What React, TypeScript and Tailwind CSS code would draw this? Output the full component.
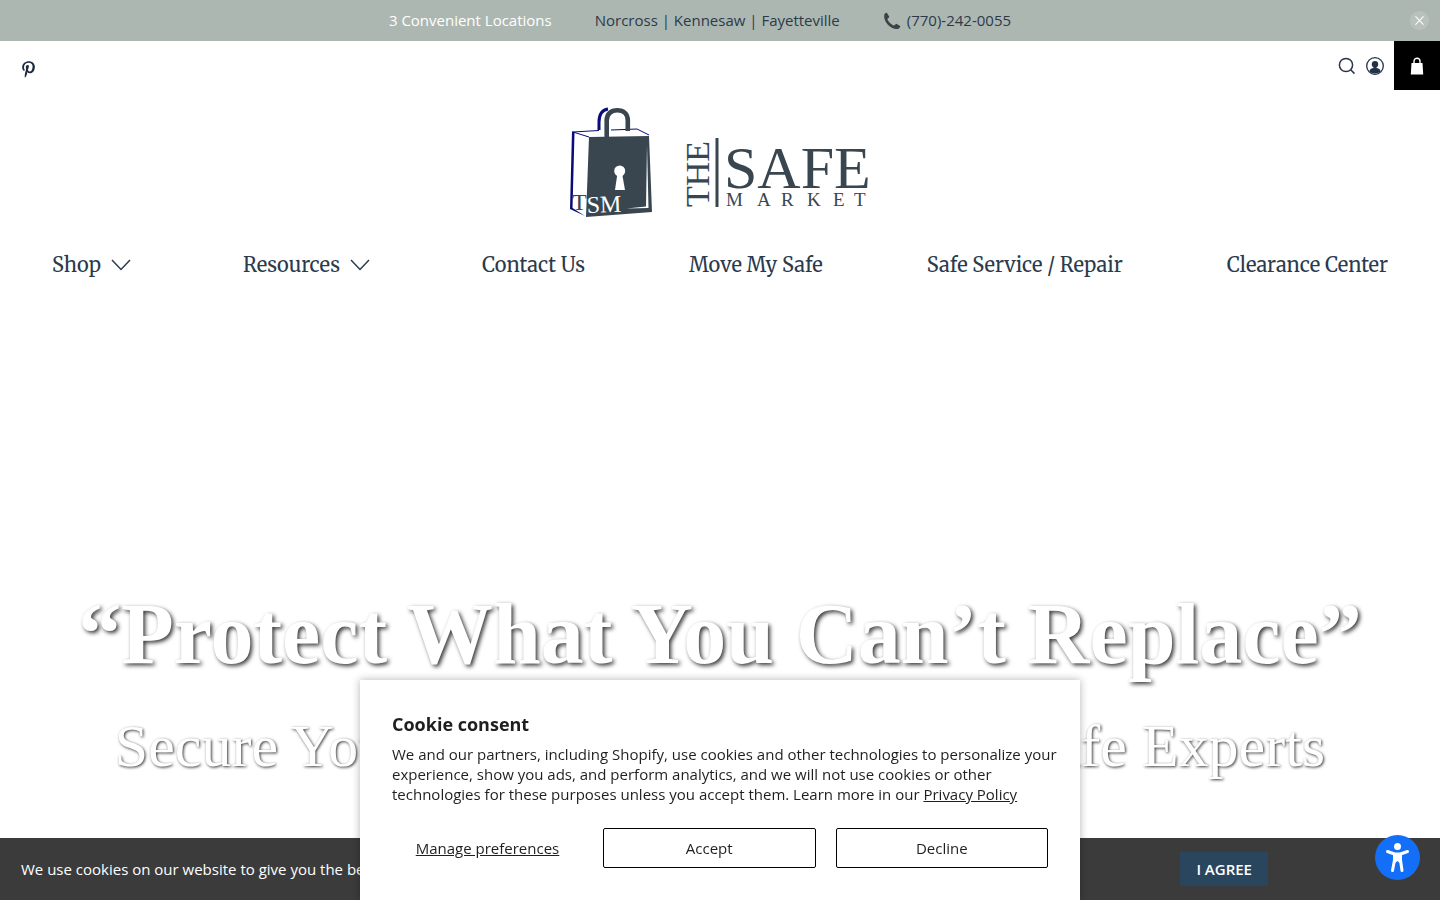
import { FaPinterestP } from 'react-icons/fa';

const navItems = [
  { label: 'Shop', menu: true },
  { label: 'Resources', menu: true },
  { label: 'Contact Us', menu: false },
  { label: 'Move My Safe', menu: false },
  { label: 'Safe Service / Repair', menu: false },
  { label: 'Clearance Center', menu: false },
];

function Logo() {
  return (
    <svg viewBox="0 0 304 112" className="h-28 w-[304px]" role="img" aria-label="The Safe Market">
      {/* bag */}
      <path d="M30 23V15C30 7 33 3 39 2" fill="none" stroke="#0a0a78" strokeWidth="3" />
      <path d="M4 25L20 30M4 25L30 23.500M42 23L68 22L80 28" fill="none" stroke="#0a0a78" strokeWidth="1" />
      <path d="M3 24L5.500 26L3.500 101L16 109L1 102Z" fill="#0a0a78" />
      <path d="M20 30L80 29L83 105L17 110Z" fill="#39464f" />
      <path d="M37.700 31V13.500C37.700 7 42 3.300 48.300 3.300S58.800 7 58.800 13.500V24" fill="none" stroke="#39464f" strokeWidth="4.600" />
      <circle cx="50.700" cy="64" r="5.500" fill="#fff" />
      <path d="M48.500 66H53L56 83H46Z" fill="#fff" />
      <path d="M78 38L79.500 101L57.500 101.500L77 99.500Z" fill="#fff" />
      <g fontFamily="'Liberation Serif', serif">
        <text x="3" y="103" fontSize="24" fill="#39464f">T</text>
        <text x="18" y="106" fontSize="24" fill="#fff" transform="rotate(-2 18 106)">SM</text>
      </g>
      {/* wordmark */}
      <g fontFamily="'Liberation Serif', serif" fill="#39464f">
        <text x="0" y="0" fontSize="34" transform="translate(140 100) rotate(-90)">THE</text>
        <text x="155" y="81" fontSize="60">SAFE</text>
        <text x="157 188 212 238 264 285" y="99" fontSize="19">MARKET</text>
      </g>
      <path d="M146.500 31H149.500V100H146.500Z" fill="#39464f" />
    </svg>
  );
}

function AnnouncementBar() {
  return (
    <div className="relative flex h-[41px] items-center justify-center bg-[#adb7b2] pr-10 text-[15px] text-[#2b3a4a]">
      <div className="flex items-center gap-[43px]">
        <span className="text-white">3 Convenient Locations</span>
        <span>Norcross | Kennesaw | Fayetteville</span>
        <a href="#call" className="flex items-center gap-1.5">
          <svg viewBox="0 0 18 18" className="size-[18px]" fill="#3b4347" aria-hidden="true">
            <path d="M1.200 3C1.600 1.500 2.900.7 4 .9L6.300 4.700C6.100 5.700 4.700 6.300 4.400 7C5 9.300 8.500 12.900 11 13.500C11.800 13.300 12.200 12 13.300 11.700L17.200 13.900C17.300 15.300 16 16.700 14.300 17C7.500 17.400.2 9.500 1.200 3Z" />
          </svg>
          (770)-242-0055
        </a>
      </div>
      <button type="button" aria-label="Close" className="absolute right-[11px] flex size-[19px] items-center justify-center rounded-full bg-white/15">
        <svg viewBox="0 0 10 10" className="size-[9px]" fill="none" stroke="#fff" strokeWidth="1.200">
          <path d="M.5.5L9.500 9.500M9.500.5L.5 9.500" />
        </svg>
      </button>
    </div>
  );
}

function Header() {
  return (
    <header>
      <div className="flex h-[49px] items-center justify-between pl-5">
        <a href="#pinterest" aria-label="Pinterest" className="pt-2 text-[#1f2b3d]">
          <FaPinterestP size={17} />
        </a>
        <div className="flex h-full items-center">
          <button type="button" aria-label="Search" className="mr-2.5">
            <svg viewBox="0 0 18 18" className="size-[18px]" fill="none" stroke="#2b3548" strokeWidth="1.500">
              <circle cx="8" cy="8" r="6.600" />
              <path d="M12.700 12.800L16.500 16.600" />
            </svg>
          </button>
          <a href="#account" aria-label="Account" className="mr-2.5">
            <svg viewBox="0 0 18 18" className="size-[18px]" fill="#22324a">
              <circle cx="9" cy="9" r="8.300" fill="none" stroke="#22324a" strokeWidth="1.300" />
              <circle cx="9" cy="7.300" r="3.200" />
              <path d="M3.300 14.300C4 12 5.800 11.300 7.500 11.100V9H10.500V11.100C12.200 11.300 14 12 14.700 14.300C11.700 17.200 6.300 17.200 3.300 14.300Z" />
            </svg>
          </a>
          <a href="#cart" aria-label="Cart" className="flex h-full w-[46px] items-center justify-center bg-black">
            <svg viewBox="0 0 14 18" className="h-[18px] w-3.5" fill="#fff">
              <path d="M1.500 6H12.500L13.200 17.500H.8Z" />
              <path d="M4 7V4.200C4 .2 10 .2 10 4.200V7" fill="none" stroke="#fff" strokeWidth="1.400" />
            </svg>
          </a>
        </div>
      </div>
      <a href="#home" className="mt-[17px] flex justify-center pl-0.5">
        <Logo />
      </a>
      <nav className="mt-7 flex items-center justify-between px-[52px] font-['Merriweather','DejaVu_Serif_Condensed','DejaVu_Serif',serif] text-xl text-[#2b3a4c]">
        {navItems.map((item) => (
          <a key={item.label} href="#nav" className="flex items-center leading-9">
            {item.label}
            {item.menu && (
              <svg viewBox="0 0 20 12" className="mr-2 ml-2.5 h-3 w-5" fill="none" stroke="#2b3a4c" strokeWidth="1.500">
                <path d="M1 1L10 10.500L19 1" />
              </svg>
            )}
          </a>
        ))}
      </nav>
    </header>
  );
}

function Hero() {
  return (
    <main className="overflow-hidden pt-[301px] pb-16 text-center font-['Liberation_Serif',serif] text-white">
      <h1 className="text-[86px] leading-[100px] font-bold whitespace-nowrap [text-shadow:2px_2px_4px_rgba(0,0,0,0.8)]">
        “Protect What You Can’t Replace”
      </h1>
      <p className="mt-[26px] text-[60px] leading-[72px] whitespace-nowrap [text-shadow:1px_1px_3px_rgba(0,0,0,0.8)]">
        Secure Your Valuables with Atlanta’s Safe Experts
      </p>
    </main>
  );
}

function CookieBar() {
  return (
    <div className="fixed inset-x-0 bottom-0 flex h-[62px] items-center justify-between bg-[#3b3b3b] pr-[172px] pl-[21px] text-[15px] text-white">
      <p>We use cookies on our website to give you the best shopping experience. By using this site, you agree to its use of cookies.</p>
      <button type="button" className="h-[34px] bg-[#2a455e] px-4 font-semibold">
        I AGREE
      </button>
    </div>
  );
}

function CookieConsent() {
  return (
    <section
      aria-labelledby="consent-title"
      className="fixed bottom-0 left-1/2 w-[720px] max-w-full -translate-x-1/2 bg-white px-8 pt-8 pb-8 text-[15px] text-[#1f1f1f] shadow-[0_0_8px_rgba(0,0,0,0.3)]"
    >
      <h2 id="consent-title" className="text-lg leading-6 font-bold">Cookie consent</h2>
      <p className="mt-2 -mr-4 leading-5">
        We and our partners, including Shopify, use cookies and other technologies to personalize your experience, show
        you ads, and perform analytics, and we will not use cookies or other technologies for these purposes unless you
        accept them. Learn more in our{' '}
        <a href="#privacy" className="underline">Privacy Policy</a>
      </p>
      <div className="mt-6 grid grid-cols-[191px_1fr_1fr] gap-5">
        <button type="button" className="h-10 underline">Manage preferences</button>
        <button type="button" className="h-10 rounded-xs border border-black">Accept</button>
        <button type="button" className="h-10 rounded-xs border border-black">Decline</button>
      </div>
    </section>
  );
}

export default function App() {
  return (
    <div className="min-h-screen bg-white font-['Open_Sans',sans-serif]">
      <AnnouncementBar />
      <Header />
      <Hero />
      <CookieBar />
      <CookieConsent />
      <button type="button" aria-label="Accessibility" className="fixed right-5 bottom-5 size-[45px] rounded-full bg-[#146ff8]">
        <svg viewBox="0 0 45 45" fill="#fff">
          <circle cx="22.500" cy="11.500" r="3.500" />
          <path d="M12.500 16.500L19.500 19V25L17.500 35.500M32.500 16.500L25.500 19V25L27 35.500M19.500 19H25.500" fill="none" stroke="#fff" strokeWidth="3" strokeLinecap="round" strokeLinejoin="round" />
          <path d="M18.500 18H26.500V25L24.500 28L22.500 26L20 28L18.500 25Z" />
        </svg>
      </button>
    </div>
  );
}
